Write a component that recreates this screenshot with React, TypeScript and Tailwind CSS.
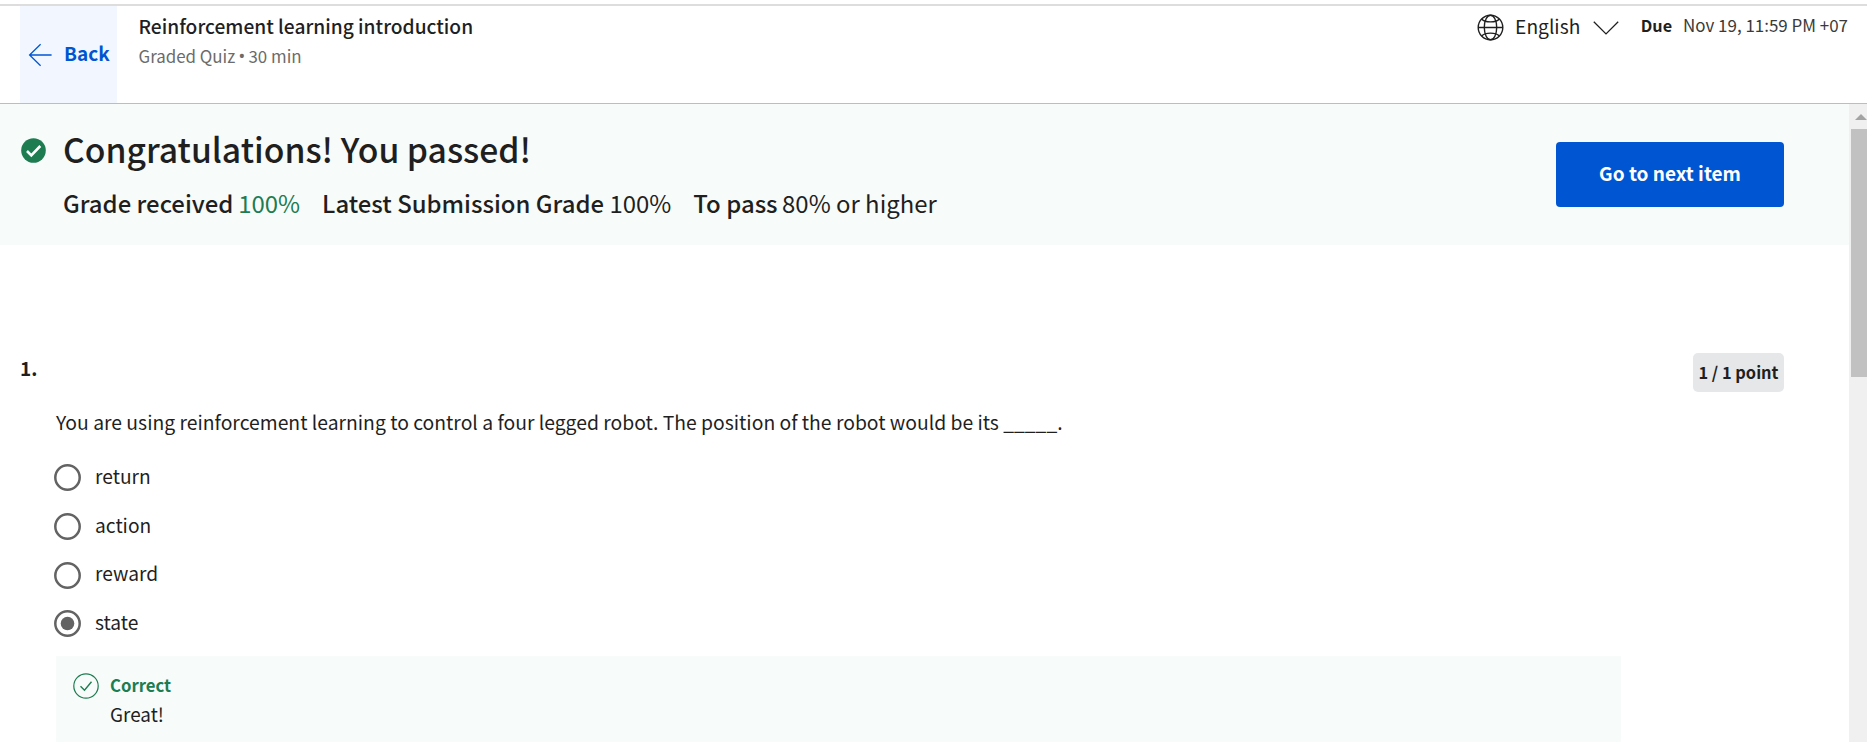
const OPTIONS = [
  { label: "return", checked: false },
  { label: "action", checked: false },
  { label: "reward", checked: false },
  { label: "state", checked: true },
];

function BackArrow() {
  return (
    <svg className="h-6 w-6 shrink-0" viewBox="0 0 24 24" fill="none" stroke="#0056d2" strokeWidth="1.3">
      <path d="M12.6 1.2 1.6 12l11 10.8M1.6 12H23.6" />
    </svg>
  );
}

function Globe() {
  return (
    <svg className="h-[27px] w-[27px] shrink-0" viewBox="0 0 27 27" fill="none" stroke="#1f1f1f" strokeWidth="1.4">
      <circle cx="13.5" cy="13.5" r="12.3" />
      <ellipse cx="13.5" cy="13.5" rx="6.2" ry="12.3" />
      <path d="M1.2 13.5h24.6M4.8 5.2c3.4 3.6 14 3.6 17.400 0M4.800 21.800c3.400-3.600 14-3.600 17.400 0" />
    </svg>
  );
}

function ChevronDown() {
  return (
    <svg className="h-[14px] w-[26px] shrink-0" viewBox="0 0 26 14" fill="none" stroke="#1f1f1f" strokeWidth="1.3">
      <path d="M.8.8 13 12.900 25.200.8" />
    </svg>
  );
}

function Header() {
  return (
    <header className="mt-1 flex h-[100px] shrink-0 justify-between border-t-2 border-b border-t-[#dddddd] border-b-[#bdbdbd] pl-5 pr-[19px]">
      <div className="flex">
        <button className="flex w-[97px] items-center bg-[#f2f7ff] pl-2 text-[19px] font-bold leading-6 text-[#0056d2]">
          <BackArrow />
          <span className="ml-[12px] -translate-y-[2px]">Back</span>
        </button>
        <div className="ml-[21.500px] pt-2">
          <h2 className="text-[19.180px] font-medium leading-6">Reinforcement learning introduction</h2>
          <p className="mt-[6px] flex text-[16.900px] leading-6 text-[#6b6b6b]">
            Graded Quiz<span className="mx-[3px] font-['Open_Sans',sans-serif] text-[19px]">•</span>30 min
          </p>
        </div>
      </div>
      <div className="flex h-10 items-start pt-2">
        <Globe />
        <span className="ml-[11px] text-[19.200px] leading-6">English</span>
        <span className="ml-[12.500px] pt-[7px]"><ChevronDown /></span>
        <span className="ml-[22px] text-[16.200px] font-bold leading-[22px]">Due</span>
        <span className="ml-[11px] text-[16.950px] leading-[22px] text-[#3a3a3a]">Nov 19, 11:59 PM +07</span>
      </div>
    </header>
  );
}

function ResultBanner() {
  return (
    <section className="flex h-[141px] shrink-0 justify-between bg-[#f7fbfa] pl-[21px] pr-[65px]">
      <div className="flex pt-[23px]">
        <svg className="mt-[11px] h-[25px] w-[25px] shrink-0" viewBox="0 0 25 25">
          <circle cx="12.500" cy="12.500" r="12.300" fill="#1d7c50" />
          <path d="m6 13 4.300 4.300 9-9.300" fill="none" stroke="#fff" strokeWidth="2.600" />
        </svg>
        <div className="ml-[17px]">
          <h1 className="text-[33.700px] font-medium leading-[44px]">Congratulations! You passed!</h1>
          <div className="mt-4 flex gap-[22px] text-[23.920px] leading-8">
            <p className="flex gap-[5px]"><b className="font-medium">Grade received</b><span className="text-[#1d7c50]">100%</span></p>
            <p className="flex gap-[5.500px]"><b className="font-medium">Latest Submission Grade</b><span>100%</span></p>
            <p className="flex gap-[4.500px]"><b className="font-medium">To pass</b><span>80% or higher</span></p>
          </div>
        </div>
      </div>
      <button className="mt-[38px] h-[65px] w-[228px] rounded-[4px] bg-[#0056d2] pb-[3px] text-[19px] font-bold leading-6 text-white">
        Go to next item
      </button>
    </section>
  );
}

function Radio({ checked }: { checked: boolean }) {
  return (
    <svg className="h-[27px] w-[27px] shrink-0" viewBox="0 0 27 27">
      <circle cx="13.500" cy="13.500" r="12.200" fill="none" stroke="#636363" strokeWidth="2.500" />
      {checked && <circle cx="13.500" cy="13.500" r="6.800" fill="#636363" />}
    </svg>
  );
}

function Question() {
  return (
    <section className="flex grow flex-col pt-[108px] pr-[65px] pl-5">
      <div className="flex h-[39px] items-start justify-between">
        <h3 className="pt-[3px] text-[19px] font-bold leading-6">1.</h3>
        <span className="flex h-[39px] w-[91px] items-center justify-center rounded-[5px] bg-[#e5e7e8] text-[16.400px] font-bold">1 / 1 point</span>
      </div>
      <p className="mt-[15.500px] ml-9 text-[19.340px] leading-7">
        You are using reinforcement learning to control a four legged robot. The position of the robot would be its _____.
      </p>
      <div className="mt-[18px] ml-[34px] flex flex-col">
        {OPTIONS.map((o) => (
          <label key={o.label} className="flex h-[48.700px] items-center gap-[14px] text-[19.200px] leading-6">
            <Radio checked={o.checked} />
            <span className="-translate-y-[2.200px]">{o.label}</span>
          </label>
        ))}
      </div>
      <div className="mt-[7.700px] mr-[163px] ml-9 flex grow gap-[11.500px] bg-[#f7fbfa] pt-[15px] pl-[16.500px]">
        <svg className="mt-[2px] h-[26px] w-[26px] shrink-0" viewBox="0 0 26 26" fill="none" stroke="#1d7c50" strokeWidth="1.200">
          <circle cx="13" cy="13" r="12.200" />
          <path d="m7.500 13.300 4 4 7-8.500" strokeWidth="1.400" />
        </svg>
        <div>
          <p className="text-[16.700px] font-bold leading-[29px] text-[#1d7c50]">Correct</p>
          <p className="text-[18.900px] leading-[27px]">Great!</p>
        </div>
      </div>
    </section>
  );
}

function ScrollBar() {
  return (
    <div className="flex w-[18px] shrink-0 flex-col bg-[#f0f0f0] pl-[2px]">
      <div className="flex h-[25px] items-start overflow-hidden pt-[10px] pl-1">
        <svg className="h-[6px] w-3 shrink-0" viewBox="0 0 12 6"><path d="M0 6 6 0l6 6z" fill="#a3a3a3" /></svg>
      </div>
      <div className="h-[248px] bg-[#c1c1c1]" />
    </div>
  );
}

export default function App() {
  return (
    <div className="flex h-[742px] w-full flex-col overflow-hidden bg-white font-['Noto_Sans_CJK_SC',sans-serif] text-[#1f1f1f]">
      <Header />
      <div className="flex min-h-0 grow">
        <main className="flex min-w-0 grow flex-col">
          <ResultBanner />
          <Question />
        </main>
        <ScrollBar />
      </div>
    </div>
  );
}
